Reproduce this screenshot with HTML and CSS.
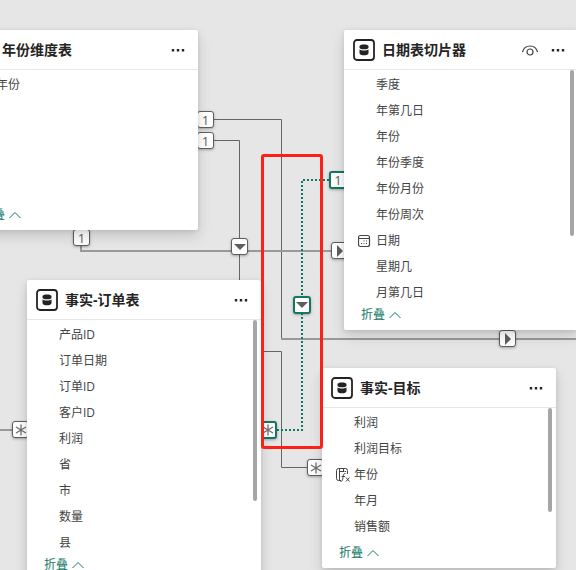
FILE: index.html
```html
<!DOCTYPE html>
<html lang="zh-CN">
<head>
  <meta charset="UTF-8" />
  <meta name="viewport" content="width=device-width, initial-scale=1.0"/>
  <title>模型视图</title>
  <link rel="stylesheet" href="styles.css">
</head>
<body>
  <svg class="symbols" aria-hidden="true">
    <symbol id="icon-table" viewBox="0 0 22 22">
      <rect x="1" y="1" width="20" height="20" rx="3" fill="#fff" stroke="#252423" stroke-width="1.8"/>
      <path d="M6.5 7.5C6.5 6 8.5 5.500 11 5.500S15.500 6 15.500 7.500V8.500C15.500 9.800 13.500 10.300 11 10.300S6.500 9.800 6.500 8.500Z" fill="#252423"/>
      <path d="M6.500 10.200C7.500 11.200 9.200 11.500 11 11.500S14.500 11.200 15.500 10.200V14C15.500 15.700 13.500 16.300 11 16.300S6.500 15.700 6.500 14Z" fill="#252423"/>
    </symbol>
    <symbol id="icon-more" viewBox="0 0 14 14">
      <path d="M.8 6h2.400v2.400H.8zM5.800 6h2.400v2.400H5.800zM10.800 6h2.400v2.400h-2.400z" fill="#252423"/>
    </symbol>
    <symbol id="icon-eye" viewBox="0 0 16 14">
      <path d="M.5 9C1.500 5 4.500 3 8 3s6.500 2 7.500 6" fill="none" stroke="#444" stroke-width="1.200"/>
      <circle cx="8" cy="9" r="3" fill="none" stroke="#444" stroke-width="1.200"/>
    </symbol>
    <symbol id="icon-up" viewBox="0 0 12 8">
      <path d="M.5 7 6 1.500 11.500 7" fill="none" stroke="currentColor"/>
    </symbol>
    <symbol id="icon-date" viewBox="0 0 14 14">
      <rect x=".5" y="1.500" width="11" height="11" rx="2" fill="none" stroke="#444" stroke-width="1.200"/>
      <path d="M.5 4.500h11" stroke="#444"/>
      <path d="M5.500 6.500h1v1h-1zM8 6.500h1v1H8zM3 9h1v1H3zM5.500 9h1v1h-1zM8 9h1v1H8z" fill="#444"/>
    </symbol>
    <symbol id="icon-calc" viewBox="0 0 14 14">
      <path d="M5 12.500H2.500Q.5 12.500.5 10.500V2.500Q.5.5 2.500.5H9.500Q11.500.5 11.500 2.500V6M3.500.5V12.500M3.500 3.500H7.500M7.500.5V4M8.500 3.500H10" fill="none" stroke="#444"/>
      <path d="M4.500 13.500C6.500 13.500 6.500 12 7 9.500S7.500 5 9.500 5.500M5.500 8.500H9M10 9.500 13.500 13.500M13.500 9.500 10 13.500" fill="none" stroke="#444"/>
    </symbol>
    <symbol id="icon-down" viewBox="0 0 12 12"><path d="M0 3h12L6 9z" fill="#605e5c"/></symbol>
    <symbol id="icon-right" viewBox="0 0 12 12"><path d="M3 0v12L9 6z" fill="#605e5c"/></symbol>
    <symbol id="icon-many" viewBox="0 0 12 12">
      <path d="M6 .5v11M1 3l10 6M11 3 1 9" fill="none" stroke="#706e6c" stroke-width="1.300"/>
    </symbol>
  </svg>

  <main class="canvas">
    <svg class="links" aria-hidden="true">
      <path class="link" d="M213 119.500H281.500V338.500"/>
      <path class="link" d="M213 140.500H239.500V351.500H281.500V467.500H308"/>
      <path class="link soft" d="M81 246V251H332"/>
      <path class="link soft" d="M281 339H2000"/>
      <path class="link soft" d="M0 430H12"/>
      <path class="link active" d="M329 180H302V430H277"/>
    </svg>

    <span class="end year-a">1</span>
    <span class="end year-b">1</span>
    <span class="end year-c">1</span>
    <span class="end dir-order"><svg><use href="#icon-down"/></svg></span>
    <span class="end dir-date"><svg><use href="#icon-right"/></svg></span>
    <span class="end dir-out"><svg><use href="#icon-right"/></svg></span>
    <span class="end many-order"><svg><use href="#icon-many"/></svg></span>
    <span class="end many-target"><svg><use href="#icon-many"/></svg></span>
    <span class="end active date-one">1</span>
    <span class="end active dir-active"><svg><use href="#icon-down"/></svg></span>
    <span class="end active many-active"><svg><use href="#icon-many"/></svg></span>

    <section class="card card-year">
      <header class="head">
        <svg class="table-icon"><use href="#icon-table"/></svg>
        <h2>年份维度表</h2>
        <button class="more" aria-label="更多选项"><svg><use href="#icon-more"/></svg></button>
      </header>
      <ul class="fields">
        <li>年份</li>
      </ul>
      <button class="collapse">折叠 <svg><use href="#icon-up"/></svg></button>
    </section>

    <section class="card card-date">
      <header class="head">
        <svg class="table-icon"><use href="#icon-table"/></svg>
        <h2>日期表切片器</h2>
        <button class="eye" aria-label="隐藏"><svg><use href="#icon-eye"/></svg></button>
        <button class="more" aria-label="更多选项"><svg><use href="#icon-more"/></svg></button>
      </header>
      <ul class="fields">
        <li>季度</li>
        <li>年第几日</li>
        <li>年份</li>
        <li>年份季度</li>
        <li>年份月份</li>
        <li>年份周次</li>
        <li class="with-icon"><svg><use href="#icon-date"/></svg>日期</li>
        <li>星期几</li>
        <li>月第几日</li>
      </ul>
      <span class="thumb"></span>
      <button class="collapse">折叠 <svg><use href="#icon-up"/></svg></button>
    </section>

    <section class="card card-order">
      <header class="head">
        <svg class="table-icon"><use href="#icon-table"/></svg>
        <h2>事实-订单表</h2>
        <button class="more" aria-label="更多选项"><svg><use href="#icon-more"/></svg></button>
      </header>
      <ul class="fields">
        <li>产品ID</li>
        <li>订单日期</li>
        <li>订单ID</li>
        <li>客户ID</li>
        <li>利润</li>
        <li>省</li>
        <li>市</li>
        <li>数量</li>
        <li>县</li>
      </ul>
      <span class="thumb"></span>
      <button class="collapse">折叠 <svg><use href="#icon-up"/></svg></button>
    </section>

    <section class="card card-target">
      <header class="head">
        <svg class="table-icon"><use href="#icon-table"/></svg>
        <h2>事实-目标</h2>
        <button class="more" aria-label="更多选项"><svg><use href="#icon-more"/></svg></button>
      </header>
      <ul class="fields">
        <li>利润</li>
        <li>利润目标</li>
        <li class="with-icon"><svg><use href="#icon-calc"/></svg>年份</li>
        <li>年月</li>
        <li>销售额</li>
      </ul>
      <span class="thumb"></span>
      <button class="collapse">折叠 <svg><use href="#icon-up"/></svg></button>
    </section>

    <div class="highlight"></div>
  </main>
</body>
</html>
```
FILE: styles.css
```css
* { box-sizing: border-box; }
body {
  margin: 0;
  background-color: #e6e6e6;
  color: #444;
  font-family: "Open Sans", "Noto Sans CJK SC", sans-serif;
  font-size: 12px;
}
button {
  padding: 0;
  border: none;
  background: none;
  font: inherit;
  cursor: pointer;
}
svg { display: block; }
.symbols {
  position: absolute;
  width: 0;
  height: 0;
}
.canvas {
  position: relative;
  height: 100vh;
  overflow: hidden;
}

/* relationship lines */
.links {
  position: absolute;
  width: 100%;
  height: 100%;
}
.link {
  fill: none;
  stroke: #666;
  stroke-width: 1;
}
.link.soft {
  stroke: #999;
  stroke-width: 2;
}
.link.active {
  stroke: #117865;
  stroke-width: 2;
  stroke-dasharray: 2 2;
}

/* relationship ends and filter directions */
.end {
  position: absolute;
  display: flex;
  align-items: center;
  justify-content: center;
  width: 17px;
  height: 17px;
  border: 1px solid #605e5c;
  border-radius: 3px;
  background-color: #fff;
  box-shadow: 0 1px 3px rgba(0, 0, 0, 0.3);
  color: #605e5c;
  font-size: 13px;
  line-height: 16px;
}
.end svg {
  width: 12px;
  height: 12px;
}
.end.active {
  width: 18px;
  height: 18px;
  border: 2px solid #117865;
}
.year-a { left: 197px; top: 111px; }
.year-b { left: 197px; top: 132px; }
.year-c { left: 73px; top: 229px; }
.dir-order { left: 231px; top: 238px; }
.dir-date { left: 331px; top: 242px; }
.dir-out { left: 499px; top: 330px; }
.many-order { left: 12px; top: 421px; }
.many-target { left: 307px; top: 459px; }
.date-one { left: 329px; top: 171px; }
.dir-active { left: 293px; top: 296px; }
.many-active { left: 259px; top: 421px; }

/* tables */
.card {
  position: absolute;
  display: flex;
  flex-direction: column;
  width: 234px;
  border-radius: 2px;
  background-color: #fff;
  box-shadow: 0 6px 14px rgba(0, 0, 0, 0.14), 0 1px 4px rgba(0, 0, 0, 0.1);
}
.card-year { left: -36px; top: 30px; height: 200px; }
.card-date { left: 344px; top: 30px; height: 300px; }
.card-order { left: 27px; top: 280px; height: 300px; }
.card-target { left: 322px; top: 368px; height: 200px; }
.head {
  display: flex;
  align-items: center;
  gap: 7px;
  height: 40px;
  padding: 0 13px 0 9px;
  border-bottom: 1px solid #e6e6e6;
}
.head h2 {
  flex: 1;
  margin: 0;
  color: #252423;
  font-size: 14px;
  line-height: 20px;
}
.table-icon {
  width: 22px;
  height: 22px;
}
.more svg {
  width: 14px;
  height: 14px;
}
.eye { margin-right: 6px; }
.eye svg {
  width: 16px;
  height: 14px;
}
.fields {
  flex: 1;
  margin: 0;
  padding: 2px 0 0;
  overflow: hidden;
  list-style: none;
}
.fields li {
  height: 26px;
  padding-left: 32px;
  line-height: 26px;
}
.fields .with-icon {
  display: flex;
  align-items: center;
  gap: 4px;
  padding-left: 14px;
}
.with-icon svg {
  width: 14px;
  height: 14px;
}
.thumb {
  position: absolute;
  top: 40px;
  right: 4px;
  width: 4px;
  border-radius: 2px;
  background-color: #a6a6a6;
}
.card-date .thumb { height: 166px; }
.card-order .thumb { height: 181px; }
.card-target .thumb { height: 104px; }
.collapse {
  display: flex;
  align-items: center;
  gap: 4px;
  margin: 0 0 6px 17px;
  color: #117865;
  line-height: 18px;
}
.collapse svg {
  width: 12px;
  height: 8px;
}

.highlight {
  position: absolute;
  left: 261px;
  top: 154px;
  width: 62px;
  height: 295px;
  border: 3px solid #ff2015;
  border-radius: 3px;
}
```
